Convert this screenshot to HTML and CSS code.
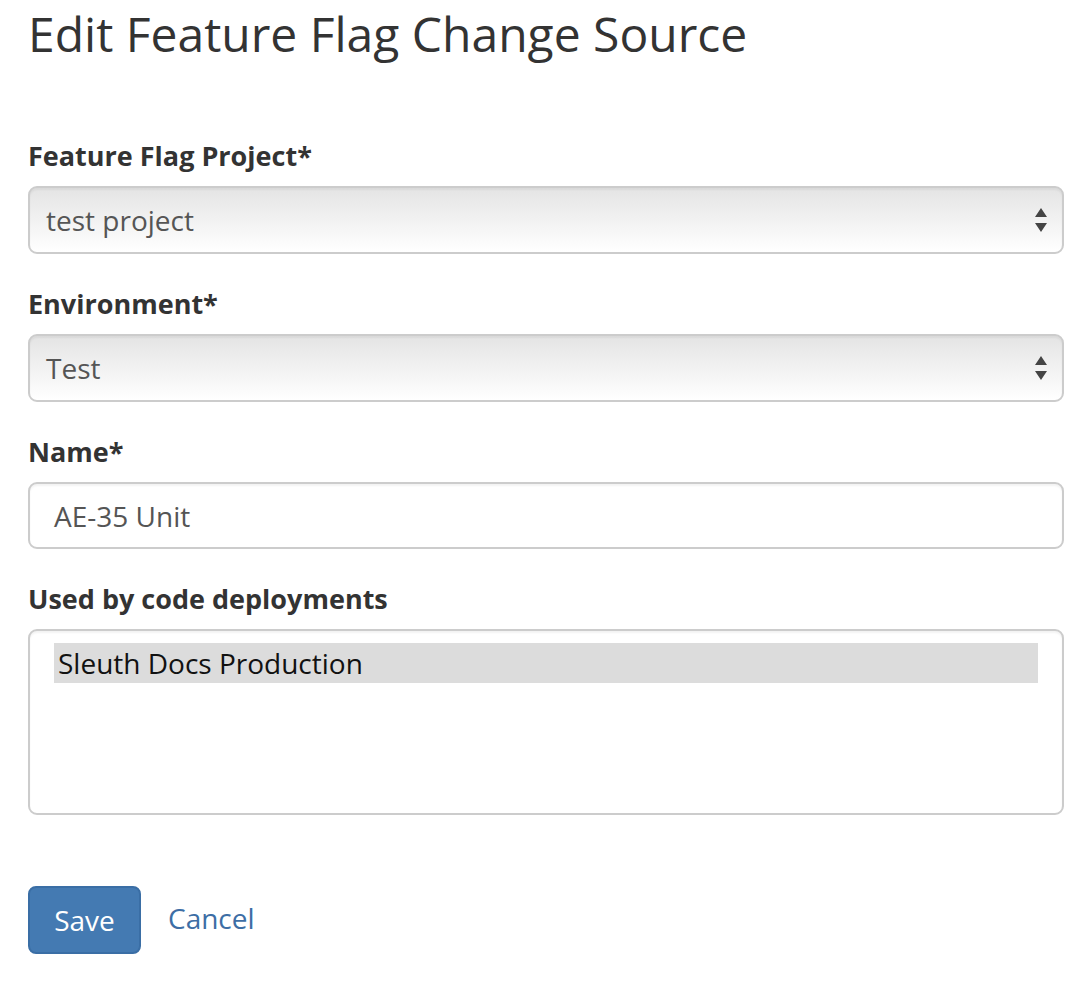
FILE: index.html
```html
<!DOCTYPE html>
<html>
<head>
<meta charset="utf-8">
<link rel="stylesheet" href="styles.css">
</head>
<body>
<div class="page">
  <h1 class="title">Edit Feature Flag Change Source</h1>
  <form class="form">
    <div class="group">
      <label class="label">Feature Flag Project*</label>
      <div class="select">
        <span class="select-text">test project</span>
        <svg class="arrows" width="12" height="26" viewBox="0 0 12 26"><path d="M6 1 L12 10 L0 10 Z M0 16 L12 16 L6 25 Z" fill="#444"/></svg>
      </div>
    </div>
    <div class="group">
      <label class="label">Environment*</label>
      <div class="select">
        <span class="select-text">Test</span>
        <svg class="arrows" width="12" height="26" viewBox="0 0 12 26"><path d="M6 1 L12 10 L0 10 Z M0 16 L12 16 L6 25 Z" fill="#444"/></svg>
      </div>
    </div>
    <div class="group">
      <label class="label">Name*</label>
      <div class="input">AE-35 Unit</div>
    </div>
    <div class="group">
      <label class="label">Used by code deployments</label>
      <div class="multi">
        <div class="option">Sleuth Docs Production</div>
      </div>
    </div>
    <div class="actions">
      <button type="button" class="btn">Save</button>
      <a class="cancel">Cancel</a>
    </div>
  </form>
</div>
</body>
</html>
```
FILE: styles.css
```css
* { box-sizing: border-box; }
body {
  margin: 0;
  background: #fff;
  font-family: "Open Sans", sans-serif;
  color: #333;
}
.page {
  padding: 0 26px 0 28px;
}
.title {
  margin: 0;
  padding-top: 6px;
  font-size: 48px;
  font-weight: 400;
  line-height: 56px;
  color: #333;
}
.form {
  margin-top: 76px;
}
.group {
  margin-bottom: 32px;
}
.label {
  display: block;
  font-size: 27px;
  font-weight: 700;
  line-height: 36px;
  margin-bottom: 12px;
  color: #333;
}
.select {
  height: 68px;
  border: 2px solid #ccc;
  border-radius: 9px;
  background: linear-gradient(#e4e4e4, #ffffff);
  display: flex;
  align-items: center;
  padding: 0 15px 0 16px;
  box-shadow: inset 0 2px 2px rgba(0,0,0,0.05);
}
.select-text {
  flex: 1;
  font-size: 28px;
  color: #555;
}
.arrows { display: block; }
.input {
  height: 67px;
  border: 2px solid #ccc;
  border-radius: 9px;
  display: flex;
  align-items: center;
  padding: 0 24px;
  font-size: 28px;
  color: #555;
  box-shadow: inset 0 2px 2px rgba(0,0,0,0.05);
}
.multi {
  height: 186px;
  border: 2px solid #ccc;
  border-radius: 9px;
  padding: 12px 24px;
  box-shadow: inset 0 2px 2px rgba(0,0,0,0.05);
}
.option {
  background: #dcdcdc;
  height: 40px;
  line-height: 40px;
  padding-left: 4px;
  font-size: 28px;
  color: #111;
}
.actions {
  margin-top: 71px;
  display: flex;
  align-items: center;
}
.btn {
  width: 113px;
  height: 68px;
  border: 2px solid #3a6ea5;
  border-radius: 8px;
  background: #447ab2;
  color: #fff;
  font-family: "Open Sans", sans-serif;
  font-size: 28px;
  padding: 0;
}
.cancel {
  margin-left: 27px;
  padding-bottom: 5px;
  font-size: 28px;
  color: #3d6ea5;
}
```
